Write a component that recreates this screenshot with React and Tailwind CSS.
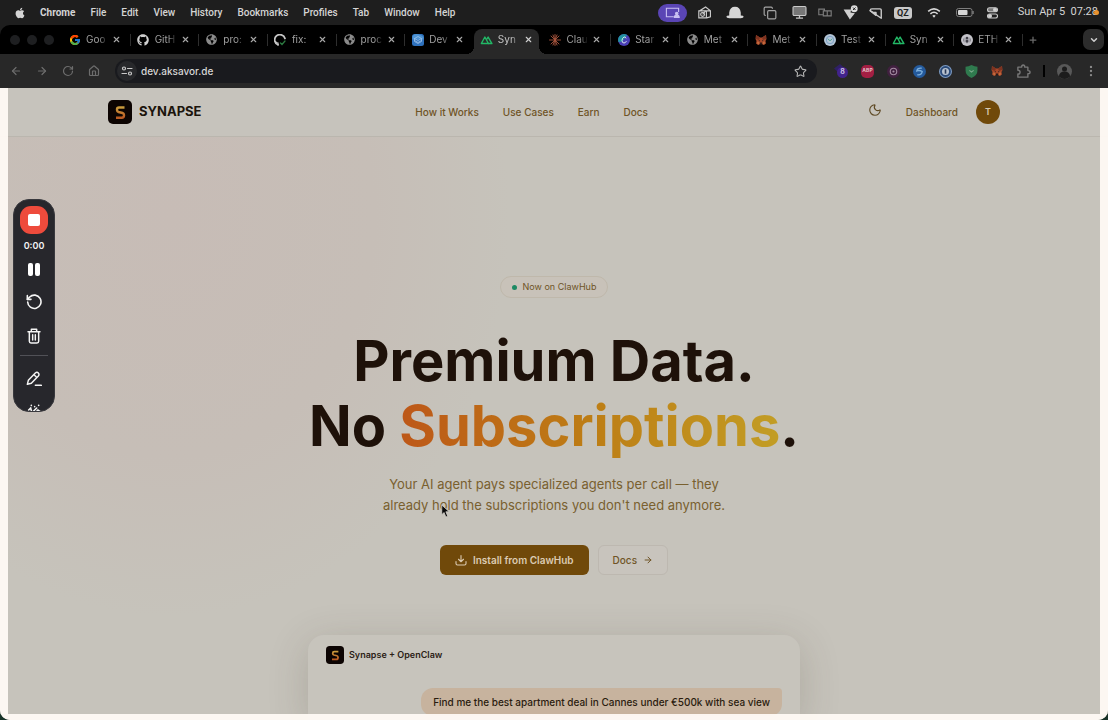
import { FaApple, FaGithub, FaGlobeAmericas } from 'react-icons/fa';
import { FcGoogle } from 'react-icons/fc';
import {
  ArrowLeft,
  ArrowRight,
  ChevronDown,
  Copy,
  House,
  Moon,
  EllipsisVertical,
  Plus,
  RotateCw,
  Star,
  X,
} from 'lucide-react';

const menuItems = ['File', 'Edit', 'View', 'History', 'Bookmarks', 'Profiles', 'Tab', 'Window', 'Help'];

const navLinks = ['How it Works', 'Use Cases', 'Earn', 'Docs'];

function NuxtIcon() {
  return (
    <svg viewBox="0 0 24 24" className="size-3.5" fill="none" stroke="#22b866" strokeWidth="2.6" strokeLinejoin="round" strokeLinecap="round">
      <path d="M9 18.500H2.500L9 6.500l6.500 12H9" />
      <path d="M12.500 10.500 15 6.500l7 12h-6.500" />
    </svg>
  );
}

function ClaudeIcon() {
  return (
    <svg viewBox="0 0 24 24" className="size-3" stroke="#a9553d" strokeWidth="1.800" strokeLinecap="round">
      <path d="M12 1v22M1 12h22M4 4l16 16M20 4 4 20M8 2l8 20M16 2 8 22" />
    </svg>
  );
}

function FoxIcon() {
  return (
    <svg viewBox="0 0 24 24" className="size-3">
      <path d="M2 2l8 5h4l8-5 1 8-2 4 1 5-5 3-3-2h-4l-3 2-5-3 1-5-2-4z" fill="#a8482a" />
      <path d="M2 2l8 5-2 5-6-2zM22 2l-8 5 2 5 6-2z" fill="#7d3320" />
      <path d="M10 17h4l1 3-1 1h-4l-1-1z" fill="#2b1a18" />
      <path d="M7 12l3 1-1 2zM17 12l-3 1 1 2z" fill="#1d1d22" />
      <path d="M4 15l4 1 1 4-4 1zM20 15l-4 1-1 4 4 1z" fill="#c46b3c" />
    </svg>
  );
}

function DevIcon() {
  return (
    <svg viewBox="0 0 24 24" className="size-3">
      <rect width="24" height="24" rx="5" fill="#2e71bd" />
      <path d="M1 4q4-5 11-3.500T23 6v5H1z" fill="#4d93d3" />
      <path d="M5 9l7-4 7 4-7 4zM5 13l7 4 7-4M5 9v6l7 4 7-4V9" fill="none" stroke="#a3c7ec" strokeWidth="1.500" />
    </svg>
  );
}

function CanvaIcon() {
  return (
    <svg viewBox="0 0 24 24" className="size-3">
      <circle cx="12" cy="12" r="12" fill="#4a3fb5" />
      <path d="M12 0a12 12 0 0 0-11 16Q9 17 13 9t7-6a12 12 0 0 0-8-3" fill="#2193a0" />
      <path d="M16 8q-1-3-4-2-4 2-4 7 0 5 4 5 3 0 4.500-3" fill="none" stroke="#d5e5ee" strokeWidth="2" strokeLinecap="round" />
    </svg>
  );
}

function TestIcon() {
  return (
    <svg viewBox="0 0 24 24" className="size-3">
      <circle cx="12" cy="12" r="12" fill="#b4c6d6" />
      <circle cx="12" cy="12" r="7.500" fill="none" stroke="#7a9fc4" strokeWidth="2" />
      <path d="M8 10q4 7 8 0" fill="none" stroke="#57a596" strokeWidth="2" strokeLinecap="round" />
    </svg>
  );
}

function EthIcon() {
  return (
    <svg viewBox="0 0 24 24" className="size-3">
      <circle cx="12" cy="12" r="12" fill="#c4c3c9" />
      <path d="M5 9v6M8 7v10M16 7v10M19 9v6" stroke="#77767e" strokeWidth="1.500" />
      <circle cx="12" cy="8" r="2.500" fill="#3f3e47" />
      <path d="M12 10l3 4-3 5-3-5z" fill="#3f3e47" />
    </svg>
  );
}

function GithubCheckIcon() {
  return (
    <svg viewBox="0 0 24 24" className="size-3" fill="none">
      <path d="M8 21.500A10.500 10.500 0 1 1 22 9" stroke="#c7c7c7" strokeWidth="3.500" strokeLinecap="round" />
      <path d="M8 22v-4q-4 0-5-3" stroke="#c7c7c7" strokeWidth="2.500" strokeLinecap="round" />
      <path d="M13 18l3 3 6-7" stroke="#2c7a41" strokeWidth="2.500" strokeLinecap="round" />
    </svg>
  );
}

const globe = <FaGlobeAmericas className="size-[11px] text-[#8b8b8b]" />;

const tabs = [
  { title: 'Goo', icon: <FcGoogle className="size-3" /> },
  { title: 'GitH', icon: <FaGithub className="size-3 text-[#d0d0d0]" /> },
  { title: 'pro:', icon: globe },
  { title: 'fix:', icon: <GithubCheckIcon /> },
  { title: 'proc', icon: globe },
  { title: 'Dev', icon: <DevIcon /> },
  { title: 'Syn', icon: <NuxtIcon />, active: true },
  { title: 'Clau', icon: <ClaudeIcon /> },
  { title: 'Star', icon: <CanvaIcon /> },
  { title: 'Met', icon: globe },
  { title: 'Met', icon: <FoxIcon /> },
  { title: 'Test', icon: <TestIcon /> },
  { title: 'Syn', icon: <NuxtIcon /> },
  { title: 'ETH', icon: <EthIcon /> },
];

function StatusIcons() {
  return (
    <div className="flex items-center gap-[11px] text-[#c9c9c9]">
      <span className="flex h-[18px] w-[29px] items-center justify-center rounded-full bg-[#5a45b5]">
        <svg viewBox="0 0 24 18" className="h-[11px] w-[15px]" fill="none" stroke="#c9c0f2" strokeWidth="1.800">
          <path d="M14 16H2V2h20v6" />
          <circle cx="19" cy="10.500" r="2" fill="#c9c0f2" />
          <path d="M15 17q0-4 4-4t4 4z" fill="#c9c0f2" />
        </svg>
      </span>
      <svg viewBox="0 0 24 24" className="size-[13px]" fill="none" stroke="currentColor" strokeWidth="2.200">
        <path d="M1.500 9h14v13h-14zM3 9l11-7 9 7v11l-7 2M15 9h8" />
        <circle cx="8.500" cy="15.500" r="3.500" />
        <path d="M8.500 15.500 14 9" />
      </svg>
      <svg viewBox="0 0 24 18" className="ml-1 h-[13px] w-[18px]" fill="#d6d6d6">
        <path d="M4 13V9q1-8 8-8t8 8v4q4 0 4 2 0 2-4 2H4q-4 0-4-2 0-2 4-2" />
      </svg>
      <Copy className="ml-2 size-3.5 text-[#a5a5a5]" />
      <svg viewBox="0 0 24 22" className="ml-1 h-[13px] w-[15px]">
        <rect x="1" y="1" width="22" height="15" rx="2" fill="#777" stroke="#c9c9c9" strokeWidth="1.800" />
        <path d="M6 20.500h12M12 16v4" stroke="#c9c9c9" strokeWidth="2.200" />
      </svg>
      <svg viewBox="0 0 24 16" className="h-[9px] w-[14px]" fill="none" stroke="#7d7d7d" strokeWidth="2">
        <path d="M9 12H1V2h10v4M9 5h7v9H9zM16 5h7v9h-7" />
      </svg>
      <svg viewBox="0 0 24 24" className="size-[15px]">
        <path d="M1 7h12l-1 5 7 1-8 10z" fill="#cfcfcf" />
        <circle cx="18" cy="6" r="5.500" fill="#dcdcdc" />
        <path d="M16 4l4 4M20 4l-4 4" stroke="#222" strokeWidth="1.600" />
      </svg>
      <svg viewBox="0 0 24 24" className="size-3.5" fill="none" stroke="currentColor" strokeWidth="2.400" strokeLinejoin="round">
        <path d="M2 8q0-3 3-3h14q2 0 2 2v14z" />
        <path d="M2 8l4 3h6v5z" fill="currentColor" />
      </svg>
      <span className="rounded-[3px] bg-[#c9c9c9] px-[3px] text-[9px] leading-3 font-bold text-[#1e1e1e]">QZ</span>
      <svg viewBox="0 0 24 18" className="ml-1 h-2.5 w-[14px]" fill="none" stroke="#d6d6d6" strokeWidth="2.800">
        <path d="M1.500 6q10.500-9 21 0M5.500 10.500q6.500-5.500 13 0" />
        <path d="M9 14q3-2.500 6 0l-3 3.500z" fill="#d6d6d6" stroke="none" />
      </svg>
      <svg viewBox="0 0 36 18" className="ml-1 h-[9px] w-[18px]">
        <rect x="1" y="1" width="31" height="16" rx="4" fill="none" stroke="#7d7d7d" strokeWidth="2" />
        <rect x="4" y="4" width="19" height="10" rx="2" fill="#d6d6d6" />
        <path d="M34 6v6" stroke="#7d7d7d" strokeWidth="3" />
      </svg>
      <svg viewBox="0 0 22 24" className="ml-0.5 h-3 w-[11px]" fill="none" stroke="#c9c9c9" strokeWidth="2.200">
        <rect x="1" y="1.500" width="20" height="8" rx="4" fill="#777" />
        <circle cx="16" cy="5.500" r="3" fill="#d6d6d6" />
        <rect x="1" y="14" width="20" height="8" rx="4" />
        <circle cx="6" cy="18" r="3" fill="#d6d6d6" />
      </svg>
    </div>
  );
}

function MenuBar() {
  return (
    <div className="flex h-[25px] shrink-0 items-center bg-[#1e1e1e] pr-[9px] pl-[14px] font-[Roboto,'Liberation_Sans',sans-serif] text-[10px] font-medium text-[#d4d4d4]">
      <FaApple className="size-3" aria-label="Apple" />
      <button className="ml-[14px] font-bold">Chrome</button>
      <div className="ml-[15px] flex gap-[15px]">
        {menuItems.map((item) => (
          <button key={item}>{item}</button>
        ))}
      </div>
      <div className="ml-auto flex items-center">
        <StatusIcons />
        <span className="ml-5 text-[11px] font-normal whitespace-pre">Sun Apr 5  07:28</span>
        <span className="-ml-1 size-[5px] rounded-full bg-[#e8912d]" />
      </div>
    </div>
  );
}

function Tab({ title, icon, active, divider }) {
  return (
    <div className="flex min-w-0 flex-1 items-center">
      <div className={`relative flex h-full w-[65px] items-center rounded-t-lg pb-1 pl-1.5 ${active ? 'bg-[#282828]' : ''}`}>
        {active && (
          <>
            <span className="absolute bottom-0 -left-2 size-2 bg-[radial-gradient(circle_at_0_0,#000_8px,#282828_8px)]" />
            <span className="absolute -right-2 bottom-0 size-2 bg-[radial-gradient(circle_at_100%_0,#000_8px,#282828_8px)]" />
          </>
        )}
        <button role="tab" aria-selected={!!active} className="flex items-center gap-[5px]">
          <span className="flex w-[13px] justify-center">{icon}</span>
          <span className={`w-[22px] overflow-hidden text-left text-[10px] whitespace-nowrap [mask-image:linear-gradient(to_right,black_60%,transparent)] ${active ? 'text-[#c4c4c4]' : 'text-[#a0a0a0]'}`}>
            {title}
          </span>
        </button>
        <button aria-label={`Close ${title}`} className="ml-1">
          <X className={`size-[9px] ${active ? 'text-[#d0d0d0]' : 'text-[#a8a8a8]'}`} strokeWidth={3} />
        </button>
      </div>
      <span className={`mb-1 ml-auto h-3 w-px ${divider ? 'bg-[#2e2e2e]' : ''}`} />
    </div>
  );
}

function TabStrip() {
  return (
    <div className="flex h-[29px] shrink-0 rounded-t-[10px] bg-black pr-1 pl-[10px]">
      <div className="flex w-[52px] shrink-0 items-center gap-[7px] text-[#1e1f21]">
        <span className="size-2.5 rounded-full bg-current" />
        <span className="size-2.5 rounded-full bg-current" />
        <span className="size-2.5 rounded-full bg-current" />
      </div>
      <div role="tablist" className="flex min-w-0 flex-1 pt-1">
        {tabs.map((tab, i) => (
          <Tab key={i} {...tab} divider={!tab.active && !tabs[i + 1]?.active} />
        ))}
      </div>
      <button aria-label="New tab" className="flex w-5 items-center justify-center">
        <Plus className="size-2.5 text-[#6a6a6a]" strokeWidth={3} />
      </button>
      <button aria-label="Search tabs" className="my-1 ml-10 flex w-[21px] items-center justify-center rounded-[7px] bg-[#2c2c2c]">
        <ChevronDown className="size-2.5 text-[#d0d0d0]" strokeWidth={3.5} />
      </button>
    </div>
  );
}

function Extensions() {
  return (
    <div className="flex items-center gap-[13px]">
      <span className="relative h-4 w-3.5">
        <svg viewBox="0 0 24 24" className="size-3" fill="#2f2065">
          <path d="M0 11 12 2l10 9-10 11z" />
        </svg>
        <span className="absolute top-1 left-[3px] flex size-[11px] items-center justify-center rounded-full bg-[#42238c] text-[7px] font-bold text-[#c9c0e0]">8</span>
      </span>
      <span className="flex size-[13px] items-center justify-center rounded-[5px] bg-[#a31f43] text-[5px] font-bold text-[#e0c0c8]">ABP</span>
      <svg viewBox="0 0 24 24" className="size-[13px]">
        <circle cx="12" cy="12" r="12" fill="#40203f" />
        <circle cx="12" cy="12" r="6" fill="none" stroke="#a58ba3" strokeWidth="2" />
        <circle cx="12" cy="12" r="2" fill="#a58ba3" />
      </svg>
      <svg viewBox="0 0 24 24" className="size-[13px]">
        <circle cx="12" cy="12" r="12" fill="#245a9c" />
        <path d="M16 6q-8-1-9 5 5-2 10 1-1 7-9 6" fill="none" stroke="#7db0dc" strokeWidth="2.500" />
      </svg>
      <svg viewBox="0 0 24 24" className="size-[13px]">
        <circle cx="12" cy="12" r="11" fill="#2a4a78" stroke="#7d9ac0" strokeWidth="2" />
        <circle cx="12" cy="12" r="6.500" fill="#b8c2cf" />
        <path d="M12 8v8" stroke="#2a3a58" strokeWidth="3" />
      </svg>
      <svg viewBox="0 0 24 24" className="size-[13px]">
        <path d="M12 0q6 3 11 3v7q0 9-11 14Q1 19 1 10V3q5 0 11-3" fill="#2f7a4e" />
        <path d="M8 10l4 3 4-3" fill="none" stroke="#7aa88b" strokeWidth="2" />
      </svg>
      <FoxIcon />
      <svg viewBox="0 0 24 24" className="size-[15px]" fill="none" stroke="#777" strokeWidth="2.200" strokeLinejoin="round">
        <path d="M3 5h6q0-3.500 2.500-3.500T14 5h5v5.500q3.500 0 3.500 2.500T19 15.500V21H3v-5q3.500 0 3.500-3T3 10z" />
      </svg>
    </div>
  );
}

function AddressBar() {
  return (
    <div className="flex h-[34px] shrink-0 items-center bg-[#282828] px-2.5 text-[#6d6d6d]">
      <div className="flex items-center gap-[14px]">
        <button aria-label="Back"><ArrowLeft className="size-3" strokeWidth={2.4} /></button>
        <button aria-label="Forward"><ArrowRight className="size-3" strokeWidth={2.4} /></button>
        <button aria-label="Reload"><RotateCw className="size-3" strokeWidth={2.4} /></button>
        <button aria-label="Home"><House className="size-3" strokeWidth={2.4} /></button>
      </div>
      <div className="ml-[15px] flex h-6 min-w-0 flex-1 items-center rounded-full bg-[#191a1e] pr-2.5 pl-0.5">
        <button aria-label="Site information" className="flex size-5 shrink-0 items-center justify-center rounded-full bg-[#27282b]">
          <svg viewBox="0 0 24 24" className="size-3" fill="none" stroke="#c9c9c9" strokeWidth="2.400" strokeLinecap="round">
            <circle cx="6" cy="7" r="3" />
            <path d="M13 7h9M2 17h9" />
            <circle cx="18" cy="17" r="3" />
          </svg>
        </button>
        <input
          aria-label="Address"
          defaultValue="dev.aksavor.de"
          className="ml-1 min-w-0 flex-1 bg-transparent text-[10px] font-medium text-[#d6d6d6] outline-none"
        />
        <button aria-label="Bookmark this page"><Star className="size-[13px] text-[#b5b5b5]" /></button>
      </div>
      <div className="ml-[17px] flex items-center">
        <Extensions />
        <span className="ml-3 h-3 w-0.5 bg-black" />
        <svg viewBox="0 0 24 24" className="ml-3 size-[15px]">
          <circle cx="12" cy="12" r="12" fill="#585858" />
          <circle cx="12" cy="8" r="4" fill="#1c1c1c" />
          <path d="M3 20q1-8 9-8t9 8q-9 8-18 0" fill="#1c1c1c" />
        </svg>
        <button aria-label="Chrome menu" className="ml-3"><EllipsisVertical className="size-3.5 text-[#8a8a8a]" /></button>
      </div>
    </div>
  );
}

function Logo({ className }) {
  return (
    <svg viewBox="0 0 24 24" className={className} aria-hidden="true">
      <defs>
        <linearGradient id="synapse-s" x1="0" y1="0" x2="0" y2="1">
          <stop offset="0" stopColor="#c99a3c" />
          <stop offset="1" stopColor="#bb5a22" />
        </linearGradient>
      </defs>
      <rect width="24" height="24" rx="5" fill="#0c0402" />
      <path d="M16.500 7.500H11q-2 0-2 2v.5q0 1.500 1.500 2l4 1q1.500.5 1.500 2v.5q0 2.200-2.200 2.200H8" fill="none" stroke="url(#synapse-s)" strokeWidth="2.400" />
    </svg>
  );
}

function SiteHeader() {
  return (
    <header className="border-b border-[#bab6ae] bg-[#c6c3bc]">
      <div className="mx-auto flex h-12 max-w-[892px] items-center justify-between">
        <a href="#" className="flex items-center gap-[7px] text-[13px] font-bold text-[#1b140c]">
          <Logo className="size-6" />
          SYNAPSE
        </a>
        <nav className="flex gap-6 text-[10px] font-medium text-[#6f5426]">
          {navLinks.map((link) => (
            <a key={link} href="#">{link}</a>
          ))}
        </nav>
        <div className="flex items-center text-[10px] font-medium text-[#6f5426]">
          <button aria-label="Toggle theme" className="p-1.5 pb-2.5">
            <Moon className="size-3.5 text-[#5f4a25]" strokeWidth={2} />
          </button>
          <a href="#" className="ml-[18px]">Dashboard</a>
          <button className="ml-[18px] size-6 rounded-full bg-[#70490a] text-[9px] font-semibold text-[#d8cbb4]">T</button>
        </div>
      </div>
    </header>
  );
}

function Hero() {
  return (
    <main className="flex flex-1 flex-col items-center bg-[#c6c3bb] bg-[radial-gradient(ellipse_340px_400px_at_170px_80px,#c7bcb6_0%,#c6beb7_60%,#c6c3bb_100%)] pt-[139px]">
      <div className="flex h-[22px] shrink-0 items-center gap-1.5 rounded-full border border-[#bfb8ab] bg-[#c8c2b9] px-[11px] text-[9px] text-[#6f5426]">
        <span className="size-[5px] rounded-full bg-[#1d8a63]" />
        Now on ClawHub
      </div>
      <h1 className="mt-[31px] text-center text-[56px] leading-[65px] font-bold text-[#1e1109]">
        Premium Data.
        <br />
        No{' '}
        <span className="bg-linear-to-r from-[#bd5718] via-[#bd7d14] to-[#c29d25] bg-clip-text text-transparent">Subscriptions</span>.
      </h1>
      <p className="mt-[15px] text-center text-[13px] leading-[21px] text-[#79602f]">
        Your AI agent pays specialized agents per call — they
        <br />
        already hold the subscriptions you don't need anymore.
      </p>
      <div className="mt-[29px] flex gap-[9px] text-[10px] font-semibold">
        <button className="flex h-[30px] items-center gap-1.5 rounded-md bg-[#70490a] px-[15px] text-[#dccbb2]">
          <svg viewBox="0 0 24 24" className="size-3" fill="none" stroke="currentColor" strokeWidth="2.200" strokeLinecap="round" strokeLinejoin="round">
            <path d="M12 3v12M7 10.500l5 5 5-5M2 15v4q0 3 3 3h14q3 0 3-3v-4" />
          </svg>
          Install from ClawHub
        </button>
        <a href="#" className="flex h-[30px] items-center gap-1.5 rounded-md border border-[#bdb8b0] bg-[#c8c4bd] px-[14px] font-medium text-[#6f5426]">
          Docs
          <ArrowRight className="size-2.5" strokeWidth={2.4} />
        </a>
      </div>
      <section className="mt-[60px] w-[492px] max-w-full flex-1 rounded-t-2xl bg-[#c7c4bc] px-[18px] pt-[11px] shadow-[0_8px_40px_rgba(70,60,45,0.2)]">
        <h2 className="flex items-center gap-[5px] text-[9px] font-semibold text-[#2b2115]">
          <Logo className="size-[18px]" />
          Synapse + OpenClaw
        </h2>
        <div className="mt-6 flex justify-end">
          <p className="rounded-xl rounded-tr bg-[#c7b39e] px-3 py-1.5 text-[10px] leading-4 font-medium text-[#2a1c0e]">
            Find me the best apartment deal in Cannes under €500k with sea view
          </p>
        </div>
      </section>
    </main>
  );
}

function RecorderBar() {
  return (
    <div className="absolute top-[199px] left-[13px] flex h-[213px] w-[42px] flex-col items-center overflow-hidden rounded-2xl border border-[#38383d] bg-[#27272c] text-[#f4f4f4]">
      <button aria-label="Stop recording" className="mt-1.5 flex size-7 shrink-0 items-center justify-center rounded-[11px] bg-[#ee4b3c]">
        <span className="size-3 rounded-xs bg-white" />
      </button>
      <span className="mt-1.5 text-[9px] leading-3 font-semibold">0:00</span>
      <button aria-label="Pause" className="mt-[11px] flex h-[13px] gap-0.5">
        <span className="h-[13px] w-[5px] rounded-xs bg-white" />
        <span className="h-[13px] w-[5px] rounded-xs bg-white" />
      </button>
      <button aria-label="Restart" className="mt-[18px]">
        <svg viewBox="0 0 24 24" className="size-4" fill="none" stroke="currentColor" strokeWidth="2.400" strokeLinecap="round" strokeLinejoin="round">
          <path d="M2.500 12a10 10 0 1 0 3-7.500L2 8" />
          <path d="M2 2.500V8h5.500" />
        </svg>
      </button>
      <button aria-label="Delete" className="mt-[18px]">
        <svg viewBox="0 0 24 24" className="size-4" fill="none" stroke="currentColor" strokeWidth="2.200" strokeLinecap="round" strokeLinejoin="round">
          <path d="M3 5.500h18M8 5V2h8v3M5 6v14q0 2.500 2.500 2.500h9Q19 22.500 19 20V6M10 10v8M14 10v8" />
        </svg>
      </button>
      <span className="mt-[11px] h-px w-7 shrink-0 bg-[#515157]" />
      <button aria-label="Draw" className="mt-[15px]">
        <svg viewBox="0 0 24 24" className="size-4" fill="none" stroke="currentColor" strokeWidth="2.200" strokeLinecap="round" strokeLinejoin="round">
          <path d="M2 20l1.500-6L14 3q2.500-2 4.500 0t0 4.500L8 18.500zM12 5.500l4 4M14 21.500h9" />
        </svg>
      </button>
      <button aria-label="Effects" className="mt-[17px]">
        <svg viewBox="0 0 24 24" className="size-4" fill="none" stroke="currentColor" strokeWidth="2.400" strokeLinecap="round">
          <path d="M8 2v.1M13 4v.1M19 2v.1M4 9l3-3 1 4M11 11l5-5M16 11l2-2 3 2" />
        </svg>
      </button>
    </div>
  );
}

export default function App() {
  return (
    <div className="relative flex h-screen flex-col overflow-hidden bg-[#1e1e1e] font-[Inter,'Liberation_Sans',sans-serif]">
      <MenuBar />
      <TabStrip />
      <AddressBar />
      <div className="min-h-0 flex-1 bg-[#183328]">
        <div className="relative flex h-full flex-col overflow-hidden rounded-b-[10px]">
          <SiteHeader />
          <Hero />
          {/* highlighted edge of the recorded area */}
          <div className="pointer-events-none absolute inset-0 border-x-8 border-b-[6px] border-[#fffaf4]/95" />
        </div>
      </div>
      <RecorderBar />
      <svg viewBox="0 0 12 18" className="pointer-events-none absolute top-[504px] left-[441px] h-[14px] w-[9px]">
        <path d="M1 1v13l3-3 2.500 6 2.500-1-2.500-6H11z" fill="#0a0a0a" stroke="#d8d5cf" strokeWidth="1" />
      </svg>
    </div>
  );
}
